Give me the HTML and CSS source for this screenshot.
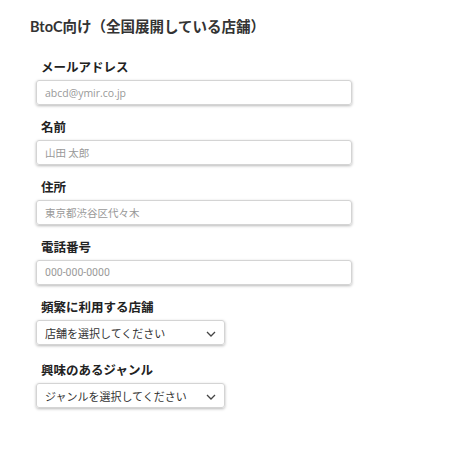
FILE: index.html
```html
<!DOCTYPE html>
<html lang="ja">
<head>
<meta charset="utf-8">
<link rel="stylesheet" href="styles.css">
</head>
<body>
<div class="page">
  <h1 class="title">BtoC向け（全国展開している店舗）</h1>
  <div class="form">
    <div class="field">
      <div class="label">メールアドレス</div>
      <div class="input"><span class="ph latin">abcd@ymir.co.jp</span></div>
    </div>
    <div class="field">
      <div class="label">名前</div>
      <div class="input"><span class="ph">山田 太郎</span></div>
    </div>
    <div class="field">
      <div class="label">住所</div>
      <div class="input"><span class="ph">東京都渋谷区代々木</span></div>
    </div>
    <div class="field">
      <div class="label">電話番号</div>
      <div class="input"><span class="ph num">000-000-0000</span></div>
    </div>
    <div class="field field-select">
      <div class="label">頻繁に利用する店舗</div>
      <div class="select"><span class="sel-text">店舗を選択してください</span>
        <svg class="chev" width="10" height="6" viewBox="0 0 10 6"><path d="M1 1l4 4 4-4" fill="none" stroke="#444" stroke-width="1.3"/></svg>
      </div>
    </div>
    <div class="field field-select">
      <div class="label">興味のあるジャンル</div>
      <div class="select"><span class="sel-text">ジャンルを選択してください</span>
        <svg class="chev" width="10" height="6" viewBox="0 0 10 6"><path d="M1 1l4 4 4-4" fill="none" stroke="#444" stroke-width="1.3"/></svg>
      </div>
    </div>
  </div>
</div>
</body>
</html>
```

FILE: styles.css
```css
html, body {
  margin: 0;
  padding: 0;
  background: #fff;
}
body {
  font-family: "Noto Sans CJK JP", "Noto Sans", sans-serif;
  color: #222;
}
.page {
  padding: 17px 0 0 30px;
}
.title {
  margin: 0;
  font-size: 14.5px;
  line-height: 20px;
  font-weight: 700;
  color: #333;
  font-family: "Lato", "Noto Sans CJK JP", sans-serif;
}
.form {
  margin-left: 6px;
  margin-top: 20px;
  display: flex;
  flex-direction: column;
}
.field {
  display: flex;
  flex-direction: column;
  margin-bottom: 12px;
}
.field-select {
  margin-bottom: 15px;
}
.label {
  padding-left: 5px;
  font-size: 12.5px;
  line-height: 20px;
  font-weight: 700;
  color: #222;
}
.input {
  margin-top: 3px;
  width: 316px;
  height: 25px;
  box-sizing: border-box;
  border: 1px solid #d4d4d4;
  border-radius: 3px;
  box-shadow: 0 1px 3px rgba(0,0,0,0.28);
  display: flex;
  align-items: center;
  padding-left: 8px;
}
.ph {
  font-size: 10.5px;
  color: #999;
}
.ph.latin {
  font-family: "Open Sans", "Noto Sans CJK JP", sans-serif;
}
.ph.num {
  font-family: "Roboto", sans-serif;
}
.select {
  margin-top: 3px;
  width: 189px;
  height: 25px;
  box-sizing: border-box;
  border: 1px solid #d4d4d4;
  border-radius: 3px;
  box-shadow: 0 1px 3px rgba(0,0,0,0.28);
  display: flex;
  align-items: center;
  justify-content: space-between;
  padding: 0 8px 0 8px;
}
.sel-text {
  font-size: 11px;
  color: #333;
}
.chev {
  margin-top: 3px;
}
```
